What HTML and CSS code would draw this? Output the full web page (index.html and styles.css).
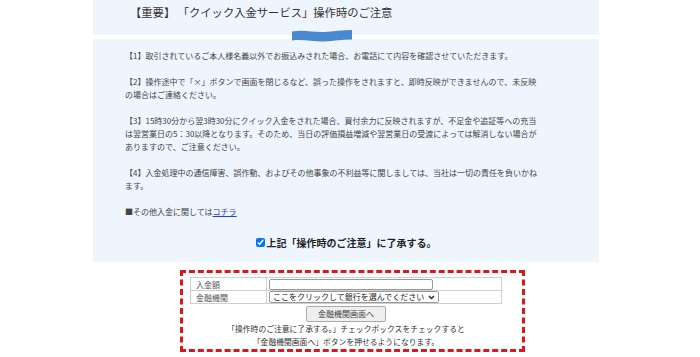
FILE: index.html
```html
<!DOCTYPE html>
<html lang="ja">
<head>
  <meta charset="UTF-8" />
  <meta name="viewport" content="width=device-width, initial-scale=1.0"/>
  <title>クイック入金サービス</title>
  <link rel="stylesheet" href="styles.css">
</head>
<body>

  <div class="page">

    <!-- 見出し -->
    <div class="notice-head">
      <h1>【重要】 「クイック入金サービス」操作時のご注意</h1>
    </div>

    <!-- 波形アイコン -->
    <svg class="wave" width="60" height="13" viewBox="0 0 60 13">
      <path d="M0,2.5 C12,0.5 22,3.5 32,3 C42,2.5 50,1 60,1 L60,10.5 C50,10.5 42,12 32,12.5 C22,13 12,10 0,11.5 Z" fill="#4a89cf"/>
    </svg>

    <!-- 注意事項 -->
    <div class="notice-body">
      <p>【1】取引されているご本人様名義以外でお振込みされた場合、お電話にて内容を確認させていただきます。</p>
      <p>【2】操作途中で「×」ボタンで画面を閉じるなど、誤った操作をされますと、即時反映ができませんので、未反映<br>の場合はご連絡ください。</p>
      <p>【3】15時30分から翌3時30分にクイック入金をされた場合、買付余力に反映されますが、不足金や追証等への充当<br>は翌営業日の5：30以降となります。そのため、当日の評価損益増減や翌営業日の受渡によっては解消しない場合が<br>ありますので、ご注意ください。</p>
      <p>【4】入金処理中の通信障害、誤作動、およびその他事象の不利益等に関しましては、当社は一切の責任を負いかね<br>ます。</p>
      <p>■その他入金に関しては<a href="#">コチラ</a></p>

      <label class="agree">
        <input type="checkbox" id="agree" checked>
        <span>上記「操作時のご注意」に了承する。</span>
      </label>
    </div>

  </div>

  <!-- 入金フォーム -->
  <div class="form-box">
    <div class="form-inner">
      <table class="form-table">
        <tr>
          <th>入金額</th>
          <td><input type="text" class="amount"></td>
        </tr>
        <tr>
          <th>金融機関</th>
          <td>
            <div class="select-wrap">
              <select class="bank">
                <option>ここをクリックして銀行を選んでください</option>
              </select>
              <svg class="chevron" width="7" height="5" viewBox="0 0 7 5">
                <path d="M1,1 L3.5,3.5 L6,1" fill="none" stroke="#222" stroke-width="1.4"/>
              </svg>
            </div>
          </td>
        </tr>
      </table>
      <button class="btn-bank">金融機関画面へ</button>
      <p class="form-note">「操作時のご注意に了承する。」チェックボックスをチェックすると<br>「金融機関画面へ」ボタンを押せるようになります。</p>
    </div>
  </div>

</body>
</html>
```

FILE: styles.css
```css
body {
  margin: 0;
  background-color: #fff;
  font-family: "Noto Sans CJK JP", "Noto Sans", sans-serif;
  color: #444;
}

.page {
  position: relative;
  width: 506px;
  margin-left: 93px;
}

.notice-head {
  height: 35px;
  background-color: #eef5fd;
  padding-left: 37px;
  box-sizing: border-box;
}

.notice-head h1 {
  margin: 0;
  padding-top: 4px;
  font-size: 11.3px;
  line-height: 16px;
  font-weight: normal;
  color: #333;
}

.wave {
  position: absolute;
  left: 199px;
  top: 29px;
}

.notice-body {
  margin-top: 4px;
  height: 223px;
  box-sizing: border-box;
  background-color: #eef5fd;
  padding: 10px 0 0 32px;
  font-size: 8px;
  line-height: 13px;
}

.notice-body p {
  margin: 0 0 13px;
  white-space: nowrap;
}

.notice-body a {
  color: #2a3fd0;
  text-decoration: underline;
}

.agree {
  display: flex;
  align-items: center;
  justify-content: center;
  gap: 2px;
  margin-top: 18px;
  margin-left: -32px;
  font-size: 10px;
  font-weight: bold;
  color: #222;
}

.agree input {
  width: 9px;
  height: 9px;
  margin: 0;
}

.form-box {
  width: 345px;
  margin: 8px 0 0 180px;
  border: 3px dashed #e0141b;
  box-sizing: border-box;
  padding: 4px 0 1px 7px;
}

.form-inner {
  width: 312px;
}

.form-table {
  width: 312px;
  border-collapse: collapse;
  border: 1px solid #cfcfcf;
  font-size: 8px;
  line-height: 11px;
  color: #555;
}

.form-table th,
.form-table td {
  border: 1px solid #cfcfcf;
  height: 12px;
  padding: 0 2px;
  font-weight: normal;
  text-align: left;
  vertical-align: middle;
}

.form-table th {
  width: 68px;
  padding-left: 5px;
}

.amount {
  width: 164px;
  height: 11px;
  box-sizing: border-box;
  border: 1px solid #999;
  border-radius: 2px;
  padding: 0;
  margin: 0;
  display: block;
}

.select-wrap {
  position: relative;
  width: 170px;
}

.bank {
  appearance: none;
  width: 170px;
  height: 12px;
  box-sizing: border-box;
  font-size: 8px;
  line-height: 10px;
  font-family: "Noto Sans CJK JP", sans-serif;
  padding: 0 0 0 3px;
  margin: 0;
  border: 1px solid #999;
  border-radius: 2px;
  background-color: #fff;
  display: block;
  color: #222;
}

.chevron {
  position: absolute;
  right: 4px;
  top: 4px;
  pointer-events: none;
}

.btn-bank {
  display: block;
  width: 80px;
  height: 16px;
  margin: 2px auto 0;
  padding: 0;
  font-size: 8px;
  line-height: 14px;
  font-family: "Noto Sans CJK JP", sans-serif;
  color: #444;
  background-color: #efefef;
  border: 1px solid #aaa;
  border-radius: 2px;
}

.form-note {
  margin: 0;
  text-align: center;
  font-size: 7.8px;
  line-height: 13px;
  color: #333;
}
```
